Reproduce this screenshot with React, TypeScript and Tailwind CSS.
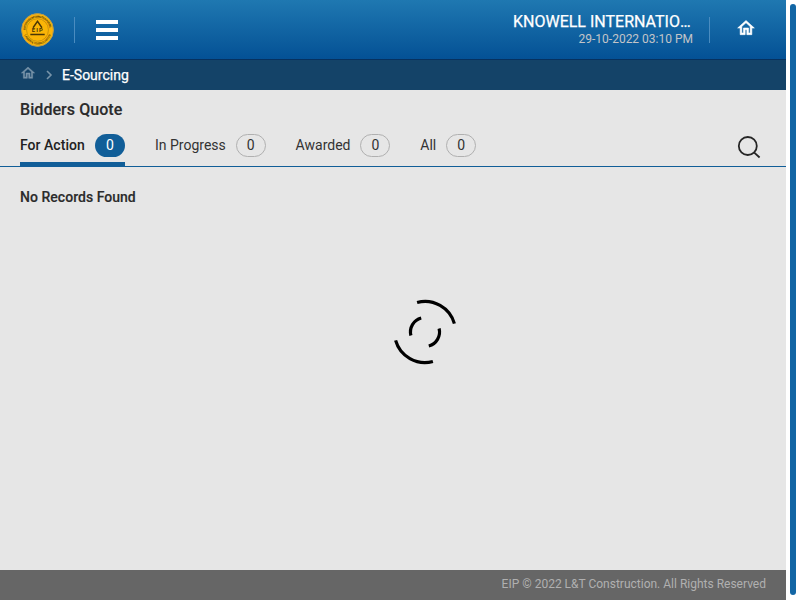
import React from "react";

function HomeIcon({ className }: { className: string }) {
  return (
    <svg viewBox="0 0 24 24" className={className} fill="currentColor" stroke="currentColor" strokeWidth="0.7">
      <path d="M12 5.69l5 4.5V18h-2v-6H9v6H7v-7.81l5-4.5M12 3L2 12h3v8h6v-6h2v6h6v-8h3L12 3z" />
    </svg>
  );
}

function Logo() {
  return (
    <svg viewBox="0 0 34 34" preserveAspectRatio="none" className="h-[34px] w-[33px] shrink-0">
      <defs>
        <path id="topArc" d="M4.6 17a12.4 12.4 0 0 1 24.8 0" />
        <path id="bottomArc" d="M2.6 17a14.4 14.4 0 0 0 28.8 0" />
      </defs>
      <circle cx="17" cy="17" r="16.4" fill="#fbb507" stroke="#b99a4c" strokeWidth="1" />
      <circle cx="17" cy="17" r="11.3" fill="none" stroke="#c08c0c" strokeWidth="0.8" />
      <g fill="#5f4708" fontFamily="Roboto, sans-serif" fontWeight="700">
        <text fontSize="2.9">
          <textPath href="#topArc" textLength="37">ENTERPRISE INFORMATION PORTAL</textPath>
        </text>
        <text fontSize="2.9">
          <textPath href="#bottomArc" startOffset="5" textLength="35">LARSEN &amp; TOUBRO LIMITED</textPath>
        </text>
        <text x="17.4" y="19.3" fontSize="6" textAnchor="middle" letterSpacing="1.2" fill="#4a3706">EIP</text>
      </g>
      <path d="M12.4 14.8L17 8.4l4.6 6.4M9.6 21.4h14.8" fill="none" stroke="#4a3706" strokeWidth="1.5" />
    </svg>
  );
}

const tabs = [
  { label: "For Action", count: 0, active: true },
  { label: "In Progress", count: 0, active: false },
  { label: "Awarded", count: 0, active: false },
  { label: "All", count: 0, active: false },
];

export default function App() {
  return (
    <div className="flex h-[600px] w-[800px] overflow-hidden bg-white font-['Roboto',sans-serif]">
      <div className="relative flex w-[786px] flex-col bg-[#e6e6e6]">
        <header className="flex h-[60px] shrink-0 items-center border-b border-[#06315f] bg-linear-to-b from-[#1f78b1] to-[#045195] pl-[21px] text-white">
          <Logo />
          <div className="ml-5 h-[26px] w-px bg-[#4a8cc0]" />
          <div className="ml-[21px] flex flex-col gap-1">
            <div className="h-1 w-[22px] bg-white" />
            <div className="h-1 w-[22px] bg-white" />
            <div className="h-1 w-[22px] bg-white" />
          </div>
          <div className="mt-[-2px] ml-auto w-[180px] text-right">
            <div className="truncate text-left text-base leading-5 [-webkit-text-stroke:0.25px_white]">KNOWELL INTERNATIONAL</div>
            <div className="text-xs leading-[14px] text-[#c3c5c8]">29-10-2022 03:10 PM</div>
          </div>
          <div className="ml-4 h-[26px] w-px bg-[#4a8cc0]" />
          <HomeIcon className="mt-[-4px] mr-[30px] ml-[26px] h-5 w-5" />
        </header>
        <nav className="flex h-[30px] shrink-0 items-center bg-[#144368] pl-[20px] text-sm text-white">
          <HomeIcon className="mt-[-4px] h-4 w-4 text-[#7894a9]" />
          <svg viewBox="0 0 8 10" className="mr-[9px] ml-[9px] h-[10px] w-2 text-[#7894a9]">
            <path d="M2 1l4 4-4 4" fill="none" stroke="currentColor" strokeWidth="1.6" />
          </svg>
          <span className="[-webkit-text-stroke:0.25px_white]">E-Sourcing</span>
        </nav>
        <h1 className="h-[38px] shrink-0 pl-5 text-base leading-[40px] font-medium tracking-[0.06px] text-[#2b2b2b] [-webkit-text-stroke:0.15px_#2b2b2b]">
          Bidders Quote
        </h1>
        <div className="flex h-[39px] shrink-0 items-start border-b border-[#115e98] pl-5">
          <div className="flex flex-1 gap-[30px]">
            {tabs.map((t) => (
              <div
                key={t.label}
                className={
                  t.active
                    ? "flex h-[38px] w-[105px] items-start justify-between border-b-[4px] border-[#115e98] pt-[6px] text-sm leading-[23px] font-medium tracking-[0.03px] text-[#212121]"
                    : "flex h-[38px] items-start gap-[10px] pt-[6px] text-sm leading-[23px] text-[#333333]"
                }
              >
                <span>{t.label}</span>
                <span
                  className={
                    t.active
                      ? "h-[23px] w-[30px] rounded-[12px] bg-[#115e98] text-center font-normal text-white"
                      : "h-[23px] w-[29.8px] rounded-[12px] border border-[#b0b0b0] text-center leading-[21px]"
                  }
                >
                  {t.count}
                </span>
              </div>
            ))}
          </div>
          <svg viewBox="0 0 24 24" className="mt-[7px] mr-[25px] h-6 w-6" fill="none" stroke="#262626" strokeWidth="1.8">
            <circle cx="10.8" cy="11" r="9" />
            <path d="M17 17.3l5.6 5.2" />
          </svg>
        </div>
        <main className="flex-1 pt-[20px] pl-5 text-sm font-medium tracking-[0.03px] text-[#2b2b2b] [-webkit-text-stroke:0.15px_#2b2b2b]">
          No Records Found
        </main>
        <footer className="h-[30px] shrink-0 bg-[#666666] pr-5 text-right text-xs leading-[28px] text-[#b0b0b0]">
          EIP © 2022 L&amp;T Construction. All Rights Reserved
        </footer>
        <svg viewBox="-35 -35 70 70" className="absolute top-[297px] left-[390px] h-[70px] w-[70px]" fill="none" stroke="#000" strokeWidth="3.2">
          <path d="M-7.9 -29.5A30.5 30.5 0 0 1 29.4 -8.4M7.9 29.5A30.5 30.5 0 0 1 -29.4 8.4" />
          <path d="M-3.8 -14A14.5 14.5 0 0 0 -14.1 3.5M3.8 14A14.5 14.5 0 0 0 14.1 -3.5" />
        </svg>
      </div>
      <div className="mt-1 ml-1 h-[591px] w-[6px] rounded-[3px] bg-[#1266a5]" />
    </div>
  );
}
